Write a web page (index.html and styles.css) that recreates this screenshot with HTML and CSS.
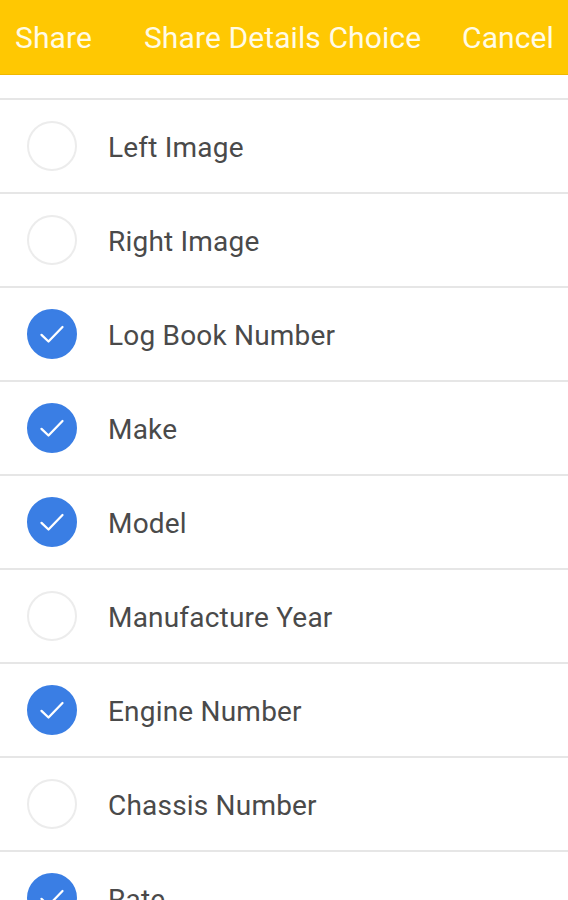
FILE: index.html
```html
<!DOCTYPE html>
<html lang="en">
<head>
    <meta charset="UTF-8">
    <meta name="viewport" content="width=device-width, initial-scale=1.0">
    <title>Share Details Choice</title>
    <link rel="stylesheet" href="styles.css">
</head>
<body>
    <div class="header">
        <span class="header-btn">Share</span>
        <span class="header-title">Share Details Choice</span>
        <span class="header-btn">Cancel</span>
    </div>

    <div class="spacer"></div>

    <ul class="choice-list">
        <li class="choice"><span class="check"></span>Left Image</li>
        <li class="choice"><span class="check"></span>Right Image</li>
        <li class="choice"><span class="check on"><svg viewBox="0 0 24 24"><path d="M6 12.5l4 3.8 8-8.3"/></svg></span>Log Book Number</li>
        <li class="choice"><span class="check on"><svg viewBox="0 0 24 24"><path d="M6 12.5l4 3.8 8-8.3"/></svg></span>Make</li>
        <li class="choice"><span class="check on"><svg viewBox="0 0 24 24"><path d="M6 12.5l4 3.8 8-8.3"/></svg></span>Model</li>
        <li class="choice"><span class="check"></span>Manufacture Year</li>
        <li class="choice"><span class="check on"><svg viewBox="0 0 24 24"><path d="M6 12.5l4 3.8 8-8.3"/></svg></span>Engine Number</li>
        <li class="choice"><span class="check"></span>Chassis Number</li>
        <li class="choice"><span class="check on"><svg viewBox="0 0 24 24"><path d="M6 12.5l4 3.8 8-8.3"/></svg></span>Rate</li>
    </ul>
</body>
</html>
```

FILE: styles.css
```css
body {
    font-family: Roboto, "Noto Sans", sans-serif;
    margin: 0;
    padding: 0;
    background-color: white;
    overflow: hidden;
}
.header {
    height: 74px;
    background-color: #ffc802;
    border-bottom: 1px solid #f0b800;
    display: flex;
    align-items: center;
    padding: 0 14px 0 15px;
    color: #fffbe6;
    font-size: 30px;
    letter-spacing: 0.1px;
}
.header-title {
    margin-left: 52px;
    flex: 1;
}
.spacer {
    height: 23px;
}
.choice-list {
    list-style: none;
    margin: 0;
    padding: 0;
}
.choice {
    height: 92px;
    border-top: 2px solid #e6e6e6;
    display: flex;
    align-items: center;
    padding-left: 27px;
    padding-top: 2px;
    box-sizing: border-box;
    font-size: 28px;
    letter-spacing: 0.2px;
    color: #4a4a4a;
}
.choice {
    height: 94px;
}
.check {
    width: 46px;
    height: 46px;
    border: 2px solid #ececec;
    border-radius: 50%;
    margin-right: 31px;
    margin-top: -3px;
    flex-shrink: 0;
    display: flex;
    align-items: center;
    justify-content: center;
}
.check.on {
    background-color: #3a7ee4;
    border-color: #3a7ee4;
}
.check svg {
    width: 42px;
    height: 42px;
    fill: none;
    stroke: white;
    stroke-width: 1.3;
    stroke-linecap: round;
    stroke-linejoin: round;
}
```
